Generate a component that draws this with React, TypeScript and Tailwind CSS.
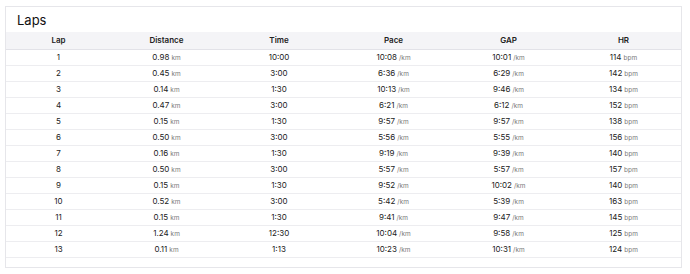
import React from 'react'

const laps = [
  ['1', '0.98', '10:00', '10:08', '10:01', '114'],
  ['2', '0.45', '3:00', '6:36', '6:29', '142'],
  ['3', '0.14', '1:30', '10:13', '9:46', '134'],
  ['4', '0.47', '3:00', '6:21', '6:12', '152'],
  ['5', '0.15', '1:30', '9:57', '9:57', '138'],
  ['6', '0.50', '3:00', '5:56', '5:55', '156'],
  ['7', '0.16', '1:30', '9:19', '9:39', '140'],
  ['8', '0.50', '3:00', '5:57', '5:57', '157'],
  ['9', '0.15', '1:30', '9:52', '10:02', '140'],
  ['10', '0.52', '3:00', '5:42', '5:39', '163'],
  ['11', '0.15', '1:30', '9:41', '9:47', '145'],
  ['12', '1.24', '12:30', '10:04', '9:58', '125'],
  ['13', '0.11', '1:13', '10:23', '10:31', '124'],
]

const Unit = ({ children }: { children: React.ReactNode }) => (
  <span className="text-[6.5px] text-[#7a7a7a] ml-[2px]">{children}</span>
)

const App = () => {
  return (
    <div className="w-[690px] h-[274px] bg-white pt-[6px] pl-[5px] font-['Inter',sans-serif] text-[#222]">
      <div className="w-[677px] h-[262px] border border-[#e6e6ea] bg-white">
        <h2 className="text-[13px] leading-none pl-[11px] pt-[7px] h-[25px] text-[#111]">Laps</h2>
        <table className="w-full table-fixed border-collapse text-[8px]">
          <colgroup>
            <col className="w-[105px]" />
            <col className="w-[111px]" />
            <col className="w-[114px]" />
            <col className="w-[115px]" />
            <col className="w-[115px]" />
            <col />
          </colgroup>
          <thead>
            <tr className="bg-[#f4f4f7] h-[17px] border-b border-[#e2e2e8]">
              <th className="font-semibold">Lap</th>
              <th className="font-semibold">Distance</th>
              <th className="font-semibold">Time</th>
              <th className="font-semibold">Pace</th>
              <th className="font-semibold">GAP</th>
              <th className="font-semibold">HR</th>
            </tr>
          </thead>
          <tbody>
            {laps.map((l) => (
              <tr key={l[0]} className="h-[16px] border-b border-[#ededf0] text-center">
                <td>{l[0]}</td>
                <td>
                  {l[1]}
                  <Unit>km</Unit>
                </td>
                <td>{l[2]}</td>
                <td>
                  {l[3]}
                  <Unit>/km</Unit>
                </td>
                <td>
                  {l[4]}
                  <Unit>/km</Unit>
                </td>
                <td>
                  {l[5]}
                  <Unit>bpm</Unit>
                </td>
              </tr>
            ))}
          </tbody>
        </table>
      </div>
    </div>
  )
}

export default App
